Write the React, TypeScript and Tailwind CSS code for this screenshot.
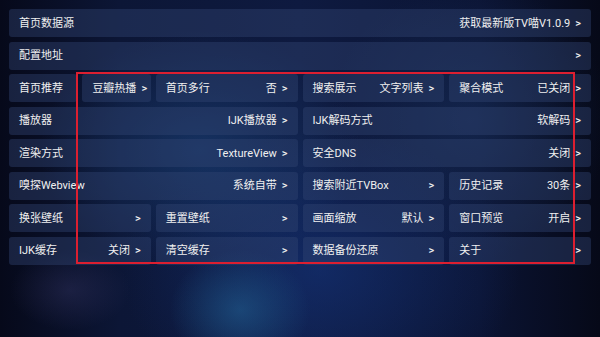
import React from "react";

type Cell = { label: string; value?: string; span: string };

const rows: Cell[][] = [
  [{ label: "首页数据源", value: "获取最新版TV喵V1.0.9", span: "col-span-8" }],
  [{ label: "配置地址", value: "", span: "col-span-8" }],
  [
    { label: "首页推荐", span: "col-span-1" },
    { label: "", value: "豆瓣热播", span: "col-span-1" },
    { label: "首页多行", value: "否", span: "col-span-2" },
    { label: "搜索展示", value: "文字列表", span: "col-span-2" },
    { label: "聚合模式", value: "已关闭", span: "col-span-2" },
  ],
  [
    { label: "播放器", value: "IJK播放器", span: "col-span-4" },
    { label: "IJK解码方式", value: "软解码", span: "col-span-4" },
  ],
  [
    { label: "渲染方式", value: "TextureView", span: "col-span-4" },
    { label: "安全DNS", value: "关闭", span: "col-span-4" },
  ],
  [
    { label: "嗅探Webview", value: "系统自带", span: "col-span-4" },
    { label: "搜索附近TVBox", value: "", span: "col-span-2" },
    { label: "历史记录", value: "30条", span: "col-span-2" },
  ],
  [
    { label: "换张壁纸", value: "", span: "col-span-2" },
    { label: "重置壁纸", value: "", span: "col-span-2" },
    { label: "画面缩放", value: "默认", span: "col-span-2" },
    { label: "窗口预览", value: "开启", span: "col-span-2" },
  ],
  [
    { label: "IJK缓存", value: "关闭", span: "col-span-2" },
    { label: "清空缓存", value: "", span: "col-span-2" },
    { label: "数据备份还原", value: "", span: "col-span-2" },
    { label: "关于", value: "", span: "col-span-2" },
  ],
];

function Item({ c }: { c: Cell }) {
  return (
    <div
      className={`${c.span} flex h-[28px] items-center justify-between rounded-[3px] bg-[rgba(50,68,115,0.42)] pl-[10px] pr-[10px] whitespace-nowrap`}
    >
      <span>{c.label}</span>
      {c.value !== undefined && (
        <span className="flex items-center">
          {c.value}
          <span className="ml-[5px] font-medium">&gt;</span>
        </span>
      )}
    </div>
  );
}

export default function App() {
  return (
    <div
      className="relative h-[337px] w-[600px] overflow-hidden text-[11px] leading-none text-[#f0f0f0] bg-[#0b1230] bg-[radial-gradient(ellipse_70px_60px_at_240px_310px,rgba(35,100,150,0.55),transparent),radial-gradient(ellipse_60px_40px_at_70px_290px,rgba(60,60,110,0.35),transparent),radial-gradient(ellipse_160px_120px_at_200px_150px,rgba(30,75,135,0.5),transparent),radial-gradient(ellipse_200px_140px_at_320px_270px,rgba(22,55,130,0.55),transparent),radial-gradient(ellipse_140px_140px_at_470px_120px,rgba(30,60,110,0.4),transparent),linear-gradient(90deg,#06091a_0%,#0c1636_20%,#0e1a40_50%,#0b1434_80%,#060918_100%)]"
      style={{ fontFamily: 'Roboto, "Noto Sans CJK SC", sans-serif' }}
    >
      <div className="grid grid-cols-8 gap-x-[5px] gap-y-[4.57px] px-[9px] pt-[9px]">
        {rows.map((r, i) => (
          <React.Fragment key={i}>
            {r.map((c, j) => (
              <Item key={j} c={c} />
            ))}
          </React.Fragment>
        ))}
      </div>
      <div className="absolute left-[76px] top-[72px] h-[192px] w-[499px] border-2 border-[#dc1f30]" />
    </div>
  );
}
